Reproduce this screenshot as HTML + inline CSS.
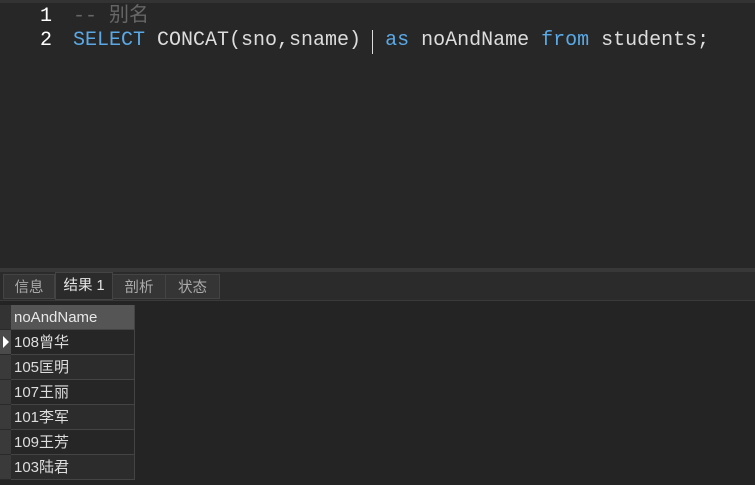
<!DOCTYPE html>
<html><head><meta charset="utf-8"><style>
body{margin:0;width:755px;height:485px;background:#1e1e1e;overflow:hidden;font-family:"Liberation Sans","Noto Sans CJK SC",sans-serif;position:relative}
#ed{position:absolute;left:0;top:0;width:755px;height:268px;background:#272727;border-top:3px solid #333;box-sizing:border-box}
.ln{position:absolute;font-family:"Liberation Mono","Noto Sans CJK SC",monospace;font-size:20px;color:#ddd;white-space:pre;line-height:24px}
.num{color:#fff;left:40px}
.kw{color:#5aa9e6}
.cm{color:#666}
#sep{position:absolute;top:268px;left:0;width:755px;height:4px;background:#383838}
#tabs{position:absolute;top:272px;left:0;width:755px;height:28px;background:#2b2b2b;border-bottom:1px solid #3a3a3a}
.tab{position:absolute;top:2px;height:25px;background:#353535;border:1px solid #444;box-sizing:border-box;color:#aaa;font-size:14.5px;line-height:26px;text-align:center}
.tab.a{top:0;height:28px;background:#2b2b2b;color:#e6e6e6}
#grid{position:absolute;top:305px;left:0}
.r{position:absolute;left:0;height:25px;width:134px}
.rh{position:absolute;left:0;top:0;width:11px;height:24px;background:#3a3a3a;border-bottom:1px solid #2a2a2a}
.c{position:absolute;left:11px;top:0;width:120px;height:24px;border-right:1px solid #444;border-bottom:1px solid #444;color:#ddd;font-size:15px;line-height:26px;padding-left:3px;box-sizing:content-box}
</style></head><body>
<div id="ed">
<div class="ln num" style="top:2px">1</div>
<div class="ln cm" style="top:2px;left:73px">-- 别名</div>
<div class="ln num" style="top:26px">2</div>
<div class="ln" style="top:26px;left:73px"><span class="kw">SELECT</span> CONCAT(sno,sname)  <span class="kw">as</span> noAndName <span class="kw">from</span> students;</div>
<div style="position:absolute;left:372px;top:27px;width:1px;height:24px;background:#ddd"></div>
</div>
<div id="sep"></div>
<div id="tabs">
<div class="tab" style="left:3px;width:52px">信息</div>
<div class="tab a" style="left:55px;width:58px">结果 1</div>
<div class="tab" style="left:112px;width:54px">剖析</div>
<div class="tab" style="left:165px;width:55px">状态</div>
</div>
<div style="position:absolute;top:301px;left:0;width:755px;height:184px;background:#242424"></div>
<div id="grid">
<div class="r" style="top:0"><div class="rh" style="background:#333"></div><div class="c" style="background:#555;color:#e8e8e8">noAndName</div></div>
<div class="r" style="top:25px"><div class="rh" style="background:#4a4a4a"></div><div style="position:absolute;left:3px;top:6px;width:0;height:0;border-left:6px solid #fff;border-top:6px solid transparent;border-bottom:6px solid transparent"></div><div class="c" style="background:#262626">108曾华</div></div>
<div class="r" style="top:50px"><div class="rh"></div><div class="c" style="background:#2c2c2c">105匡明</div></div>
<div class="r" style="top:75px"><div class="rh"></div><div class="c" style="background:#262626">107王丽</div></div>
<div class="r" style="top:100px"><div class="rh"></div><div class="c" style="background:#2c2c2c">101李军</div></div>
<div class="r" style="top:125px"><div class="rh"></div><div class="c" style="background:#262626">109王芳</div></div>
<div class="r" style="top:150px"><div class="rh"></div><div class="c" style="background:#2c2c2c">103陆君</div></div>
</div>
</body></html>
